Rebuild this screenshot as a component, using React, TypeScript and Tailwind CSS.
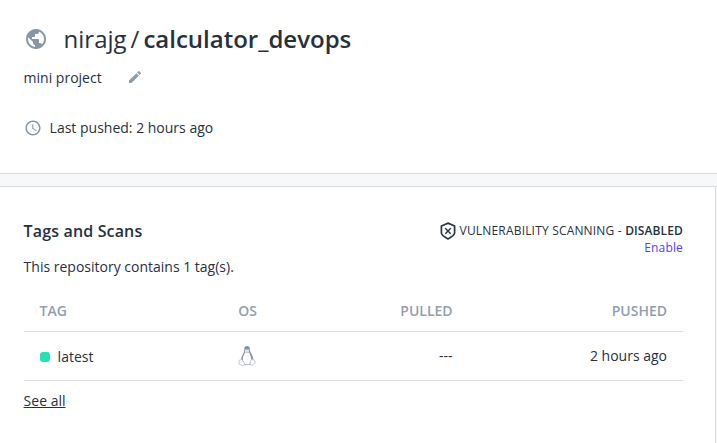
import React from "react";
import { MdPublic, MdEdit, MdAccessTime } from "react-icons/md";

function ShieldOff() {
  return (
    <svg width="16" height="18" viewBox="0 0 16 18" fill="none" stroke="#27343f" className="mt-px mr-1 shrink-0">
      <path d="M8 1.100 14.600 4v6.800c0 1.900-2.900 4.200-6.600 6.100-3.700-1.900-6.600-4.200-6.600-6.100V4z" strokeWidth="1.700" />
      <path d="m5.300 6.300 5.400 5.400m0-5.400-5.400 5.400" strokeWidth="1.400" />
    </svg>
  );
}

function Penguin() {
  return (
    <svg width="18" height="22" viewBox="0 0 18 22" fill="none">
      <path d="M6.200 5C6 2.300 7 1 9 1s3 1.300 2.900 4c0 2.400 3.600 5.400 3.600 10.500L13.500 18l-2 1.700h-5L3 16c-.4-4.500 3.400-7.800 3.200-11z" fill="#8292a0" />
      <path d="M7 7.200 9 8.300l2.200-1.100c.5 2.200 2.300 4.300 2.100 7.800l-1.500 3.400c-1.600 1.200-4.300 1.100-5.500 0C5.500 16.500 4.400 15 5 12.300 5.500 10.300 6.600 9 7 7.200z" fill="#fff" />
      <path d="M6.900 4.600h4.200v2.200L9 8.100 6.900 6.700z" fill="#dfe3e7" />
      <path d="m1.200 15.300 2.500-1 2.400 3.200c1 1.500.2 2.800-1.400 2.800L1 19.200zM16.800 15.500l-2.500-1.200-2 1.500-.3 3.500c.5 1.400 2 1.200 3 .3l2.300-2z" fill="#fff" stroke="#b7c0c8" strokeWidth=".8" />
    </svg>
  );
}

export default function App() {
  return (
    <div className="flex h-[443px] w-[717px] flex-col overflow-hidden bg-[#f7f8fa] font-['Open_Sans','Noto_Sans',sans-serif] text-sm leading-5 text-[#27303f]">
      <header className="h-[174px] shrink-0 border-b border-[#d6d8db] bg-white pr-6 pl-[23.6px] pt-[21px]">
        <div className="flex h-9 items-center">
          <MdPublic size={24} color="#8696a4" />
          <h1 className="ml-4 flex text-2xl">
            <span>nirajg</span>
            <span className="mx-1">/</span>
            <span className="font-semibold">calculator_devops</span>
          </h1>
        </div>
        <div className="mt-[10px] flex h-5 items-center">
          <span className="pt-px">mini project</span>
          <MdEdit size={16} color="#8f9dab" className="ml-[25px]" />
        </div>
        <div className="mt-[31px] flex h-5 items-center">
          <MdAccessTime size={18} color="#8696a4" />
          <span className="ml-2">Last pushed: 2 hours ago</span>
        </div>
      </header>

      <main className="mt-3 mr-px flex-1 border-t border-r border-[#d6d8db] bg-white pr-8 pl-[23.6px] pt-[34px]">
        <div className="flex h-[70px] justify-between">
          <div>
            <h2 className="text-base leading-5 font-semibold tracking-[0.15px]">Tags and Scans</h2>
            <p className="mt-4">This repository contains 1 tag(s).</p>
          </div>
          <div className="flex flex-col items-end text-xs leading-[17px]">
            <div className="flex h-[18px] items-center">
              <ShieldOff />
              <span className="tracking-[0.18px] whitespace-pre">VULNERABILITY SCANNING - <b className="font-semibold tracking-[0.12px]">DISABLED</b></span>
            </div>
            <a className="tracking-[0.16px] text-[#4f3ff5]">Enable</a>
          </div>
        </div>
        <table className="w-full table-fixed border-collapse">
          <colgroup>
            <col className="w-[198px]" />
            <col className="w-[66px]" />
            <col className="w-[181px]" />
            <col />
          </colgroup>
          <thead>
            <tr className="h-10 border-b border-[#dcdee0] text-[#929eac]">
              <th className="p-0 pl-4 text-left font-semibold">TAG</th>
              <th className="p-0 pl-[16.6px] text-left font-semibold">OS</th>
              <th className="p-0 pr-4 text-right font-semibold">PULLED</th>
              <th className="p-0 pr-4 text-right font-semibold">PUSHED</th>
            </tr>
          </thead>
          <tbody>
            <tr className="h-[49px] border-b border-[#dcdee0]">
              <td className="p-0 pt-[2px] pl-4">
                <span className="flex items-center">
                  <i className="mr-2 size-[10px] rounded-[3px] bg-[#27e0b3]" />
                  latest
                </span>
              </td>
              <td className="p-0 pl-[16.400px]"><Penguin /></td>
              <td className="p-0 pr-4 text-right">---</td>
              <td className="p-0 pr-4 text-right">2 hours ago</td>
            </tr>
          </tbody>
        </table>
        <a className="mt-[10px] inline-block underline">See all</a>
      </main>
    </div>
  );
}
